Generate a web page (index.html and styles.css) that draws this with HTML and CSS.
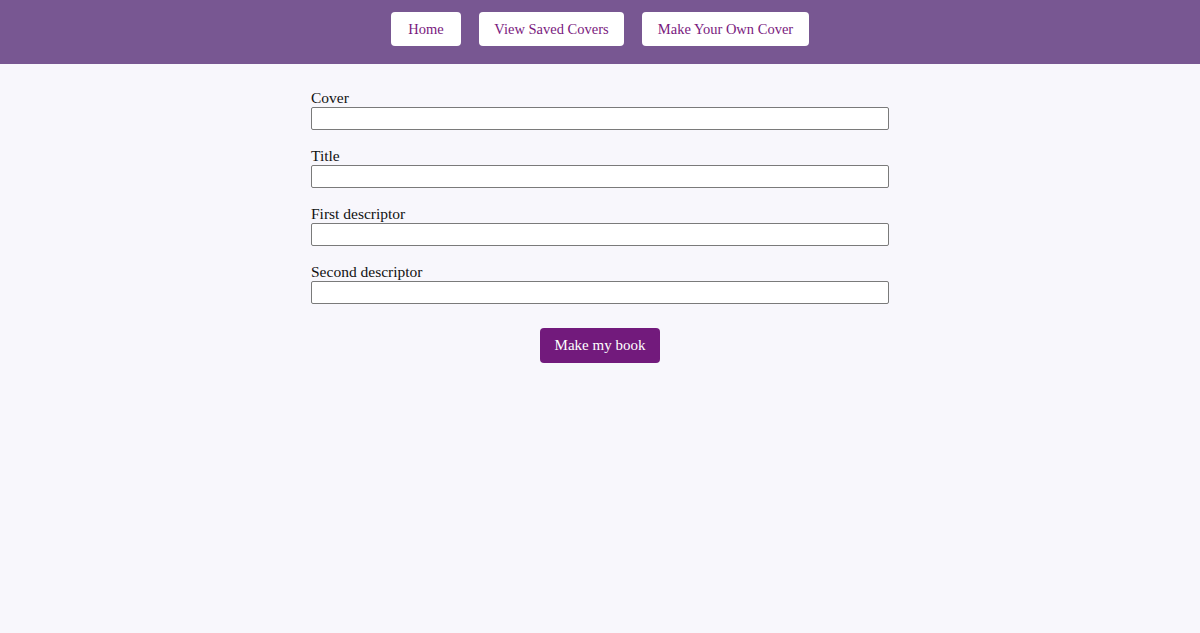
FILE: index.html
```html
<!DOCTYPE html>
<html lang="en">
<head>
<meta charset="utf-8">
<title>Make Your Own Cover</title>
<link rel="stylesheet" href="styles.css">
</head>
<body>
<header class="top-bar">
  <nav class="nav">
    <button class="nav-btn nav-home">Home</button>
    <button class="nav-btn nav-saved">View Saved Covers</button>
    <button class="nav-btn nav-make">Make Your Own Cover</button>
  </nav>
</header>
<main class="main">
  <form class="form">
    <div class="field">
      <label class="field-label" for="cover">Cover</label>
      <input class="field-input" id="cover" type="text">
    </div>
    <div class="field">
      <label class="field-label" for="title">Title</label>
      <input class="field-input" id="title" type="text">
    </div>
    <div class="field">
      <label class="field-label" for="d1">First descriptor</label>
      <input class="field-input" id="d1" type="text">
    </div>
    <div class="field">
      <label class="field-label" for="d2">Second descriptor</label>
      <input class="field-input" id="d2" type="text">
    </div>
    <div class="actions">
      <button type="button" class="make-btn">Make my book</button>
    </div>
  </form>
</main>
</body>
</html>
```
FILE: styles.css
```css
html, body {
  margin: 0;
  padding: 0;
  height: 100%;
}
body {
  background: #f8f7fc;
  font-family: "Liberation Serif", "DejaVu Serif", serif;
  color: #111;
}
.top-bar {
  background: #785792;
  height: 64px;
  box-sizing: border-box;
  padding-top: 12px;
  display: flex;
  justify-content: center;
  align-items: flex-start;
}
.nav {
  display: flex;
  gap: 18px;
}
.nav-btn {
  font-family: inherit;
  font-size: 14.5px;
  color: #7a1a7e;
  background: #fff;
  border: none;
  border-radius: 4px;
  height: 34px;
  padding: 0;
  cursor: pointer;
}
.nav-home { width: 70px; }
.nav-saved { width: 145px; }
.nav-make { width: 167px; }
.main {
  display: flex;
  justify-content: center;
  padding-top: 25px;
}
.form {
  width: 578px;
  display: flex;
  flex-direction: column;
}
.field {
  display: flex;
  flex-direction: column;
  margin-bottom: 17px;
}
.field-label {
  font-size: 15.5px;
  line-height: 18px;
}
.field-input {
  box-sizing: border-box;
  height: 23px;
  width: 100%;
  margin: 0;
  border: 1px solid #7a7a7a;
  border-radius: 2px;
  background: #fff;
}
.actions {
  display: flex;
  justify-content: center;
  padding-top: 7px;
}
.make-btn {
  font-family: inherit;
  font-size: 15px;
  color: #fff;
  background: #721a7c;
  border: none;
  border-radius: 4px;
  height: 35px;
  width: 120px;
  cursor: pointer;
}
```
